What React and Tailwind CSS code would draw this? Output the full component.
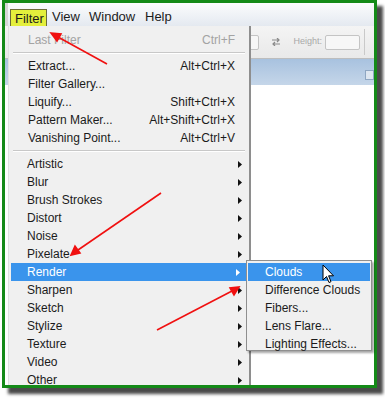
import React from 'react';

const FONT = { fontFamily: '"Liberation Sans", Arial, sans-serif' };

const topItems = [
  { label: 'Last Filter', key: 'Ctrl+F', disabled: true },
  'sep',
  { label: 'Extract...', key: 'Alt+Ctrl+X' },
  { label: 'Filter Gallery...' },
  { label: 'Liquify...', key: 'Shift+Ctrl+X' },
  { label: 'Pattern Maker...', key: 'Alt+Shift+Ctrl+X' },
  { label: 'Vanishing Point...', key: 'Alt+Ctrl+V' },
  'sep',
];

const subMenus = [
  'Artistic', 'Blur', 'Brush Strokes', 'Distort', 'Noise', 'Pixelate', 'Render',
  'Sharpen', 'Sketch', 'Stylize', 'Texture', 'Video', 'Other',
];

const renderItems = ['Clouds', 'Difference Clouds', 'Fibers...', 'Lens Flare...', 'Lighting Effects...'];

function Arrow({ color = '#111' }) {
  return (
    <svg width="4" height="7" viewBox="0 0 4 7" className="absolute right-[7px] top-[6px]">
      <path d="M0 0 L4 3.5 L0 7 Z" fill={color} />
    </svg>
  );
}

function MenuRow({ item }) {
  return (
    <div className="relative h-[18px] flex items-center justify-between pl-[19px] pr-[14px]">
      <span className={item.disabled ? 'text-[#a3a3a3]' : 'text-[#1b1b1b]'}>{item.label}</span>
      {item.key && (
        <span className={item.disabled ? 'text-[#a3a3a3]' : 'text-[#1b1b1b]'}>{item.key}</span>
      )}
    </div>
  );
}

function Separator() {
  return (
    <div className="h-[8px] flex flex-col justify-center px-[4px]">
      <div className="h-px bg-[#c8c8c8]" />
      <div className="h-px bg-white" />
    </div>
  );
}

export default function App() {
  return (
    <div className="relative w-[385px] h-[400px] bg-white overflow-hidden text-[12px]" style={FONT}>
      {/* framed screenshot */}
      <div className="ml-[2px] w-[375px] h-[388px] border-[3px] border-[#148a18] shadow-[6px_6px_3px_#4a4a4a] flex flex-col bg-white">
        {/* menubar */}
        <div className="h-[23px] bg-gradient-to-b from-[#fbfcfd] to-[#e4e9f0] flex items-end text-[13px] text-[#1b1b1b] border-l-[3px] border-[#d6d6d6]">
          <div className="ml-[2px] mb-[-1px] w-[37px] h-[18px] bg-[#e4ef3c] border border-[#6c6c3a] pl-[4px] leading-[17px]">
            Filter
          </div>
          <div className="ml-[5px] w-[37px] h-[18px] leading-[18px]">View</div>
          <div className="w-[56px] h-[18px] leading-[18px]">Window</div>
          <div className="h-[18px] leading-[18px]">Help</div>
        </div>
        {/* toolbar */}
        <div className="h-[33px] bg-gradient-to-b from-[#f4f4f4] to-[#e9e9e9] border-b border-[#bdbdbd] flex items-center justify-end pr-[9px] text-[9px] text-[#a8a8a8]">
          <div className="w-[20px] h-[15px] border border-[#c4c4c4] bg-[#f7f7f7] rounded-[2px] mr-[12px]" />
          <svg width="10" height="8" viewBox="0 0 10 8" className="mr-[12px]">
            <path d="M1 2 H8 M6 0 L8 2 L6 4 M9 6 H2 M4 4 L2 6 L4 8" stroke="#8a8a8a" strokeWidth="1.2" fill="none" />
          </svg>
          <span className="mr-[3px]">Height:</span>
          <div className="w-[35px] h-[15px] border border-[#c4c4c4] bg-[#f7f7f7] rounded-[2px]" />
          <div className="ml-[4px] w-px h-[26px] bg-[#c9c9c9]" />
        </div>
        {/* doc tab strip */}
        <div className="h-[26px] bg-gradient-to-b from-[#a8c2df] to-[#c5d6e9] flex items-center justify-end">
          <div className="w-[9px] h-[10px] bg-[#dde6f0] border border-[#8ea6c2] mt-[6px]" />
        </div>
        <div className="flex-1 bg-white" />
      </div>

      {/* Filter dropdown */}
      <div className="absolute left-[8px] top-[26px] w-[243px] h-[359px] bg-[#f0f0f0] border-l border-[#e0e0e0] border-r-2 border-r-[#8e8e8e] pt-[5px]">
        {topItems.map((item, i) =>
          item === 'sep' ? <Separator key={i} /> : <MenuRow key={i} item={item} />
        )}
        {subMenus.map((label) => {
          const active = label === 'Render';
          return (
            <div
              key={label}
              className={`relative h-[18px] flex items-center ${active ? 'bg-[#3a94ec] text-white mx-[2px] pl-[16px]' : 'text-[#1b1b1b] pl-[18px]'}`}
            >
              <span>{label}</span>
              <Arrow color={active ? '#ffffff' : '#111111'} />
            </div>
          );
        })}
      </div>

      {/* Render submenu */}
      <div className="absolute left-[246px] top-[260px] w-[126px] h-[91px] bg-[#f0f0f0] border border-[#8f8f8f] shadow-[2px_2px_2px_rgba(0,0,0,0.35)] pt-[2px] px-[1px]">
        {renderItems.map((label, i) => (
          <div
            key={label}
            className={`h-[18px] flex items-center pl-[17px] ${i === 0 ? 'bg-[#3a94ec] text-white' : 'text-[#1b1b1b]'}`}
          >
            {label}
          </div>
        ))}
      </div>

      {/* mouse cursor */}
      <svg width="13" height="20" viewBox="0 0 13 20" className="absolute left-[322px] top-[264px]">
        <path d="M1 1 L1 16 L4.5 12.5 L7 18.5 L9 17.7 L6.6 11.8 L11.5 11.8 Z" fill="#ffffff" stroke="#000" strokeWidth="1" strokeLinejoin="round" />
      </svg>

      {/* red annotation arrows */}
      <svg width="385" height="400" viewBox="0 0 385 400" className="absolute left-0 top-0 pointer-events-none">
        <g stroke="#f01010" strokeWidth="1.6" fill="#f01010">
          <line x1="107" y1="64" x2="58" y2="37" />
          <path d="M51 33 L61 34 L57 41 Z" />
          <line x1="161" y1="193" x2="78" y2="250" />
          <path d="M71 255 L75 246 L80 253 Z" />
          <line x1="157" y1="330" x2="232" y2="291" />
          <path d="M239 287 L234 295 L230 288 Z" />
        </g>
      </svg>
    </div>
  );
}
